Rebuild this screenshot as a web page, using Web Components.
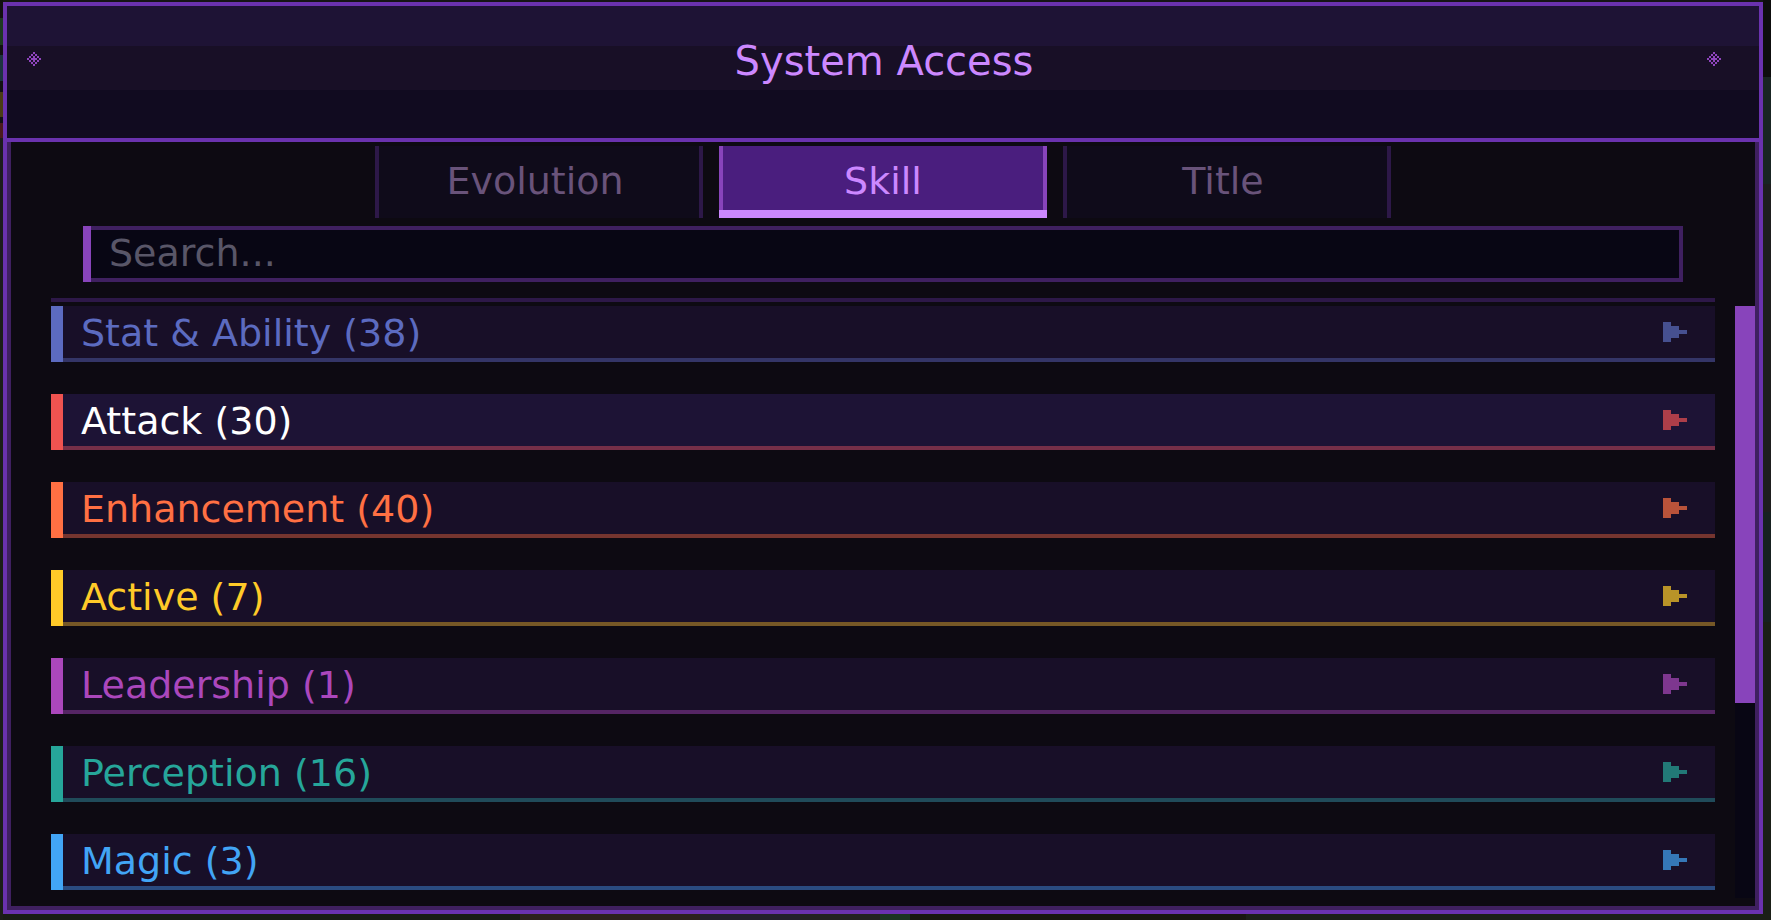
<!DOCTYPE html>
<html lang="en">
<head>
<meta charset="utf-8">
<title>System Access</title>
<style>
html { background: #191a17; }
body {
  margin: 0;
  padding: 2px 8px 6px 3px;
  font: 38px/44px "DejaVu Sans", Verdana, sans-serif;
  background:
    linear-gradient(#111 0 18px, #1d3a20 18px 45px, #111 45px 55px, #1c3440 55px 81px, #111 81px 92px, #493c14 92px 117px, #111 117px 123px, #4a1a1c 123px 138px, #1c1c1c 138px 300px, #1b1e18 300px) left / 3px 100% no-repeat,
    linear-gradient(90deg, #181c14 0 520px, #2b211c 520px 700px, #22202c 700px 800px, #222 800px 880px, #1b3420 880px 910px, #17160f 910px 1246px, #1b1f17 1246px) bottom / 100% 6px no-repeat,
    linear-gradient(#0d0d0d 0 77px, #192523 77px 184px, #1e1e1e 184px 512px, #172120 512px 622px, #1a1f17 622px) right / 8px 100% no-repeat,
    #151515;
}
</style>
</head>
<body>
<system-window heading="System Access">
  <tab-bar slot="tabs" role="tablist">
    <tab-item>Evolution</tab-item>
    <tab-item selected>Skill</tab-item>
    <tab-item>Title</tab-item>
  </tab-bar>
  <search-field slot="search" placeholder="Search..."></search-field>
  <skill-list>
    <skill-row style="--tone:#5c6bc0;--line:#343567;--mark:#465090">Stat &amp; Ability (38)</skill-row>
    <skill-row active style="--tone:#ef5350;--line:#762f48;--mark:#ad3e49">Attack (30)</skill-row>
    <skill-row style="--tone:#ff7043;--line:#75352f;--mark:#b9533a">Enhancement (40)</skill-row>
    <skill-row style="--tone:#ffca28;--line:#765826;--mark:#b99328">Active (7)</skill-row>
    <skill-row style="--tone:#ab47bc;--line:#552564;--mark:#7e378f">Leadership (1)</skill-row>
    <skill-row style="--tone:#26a69a;--line:#204b5a;--mark:#227977">Perception (16)</skill-row>
    <skill-row style="--tone:#42a5f5;--line:#2a4b80;--mark:#3577b7">Magic (3)</skill-row>
  </skill-list>
</system-window>

<script>
const define = (name, html, setup) => {
  const template = document.createElement('template');
  template.innerHTML = html;
  customElements.define(name, class extends HTMLElement {
    constructor() {
      super();
      this.attachShadow({ mode: 'open' }).append(template.content.cloneNode(true));
    }
    connectedCallback() { if (setup) setup(this, this.shadowRoot); }
  });
};

define('rune-mark', `
<style>
:host { display: block; width: 14px; height: 14px; }
svg { display: block; width: 100%; height: 100%; }
</style>
<svg viewBox="0 0 7 7" fill="#8e44bd" shape-rendering="crispEdges" aria-hidden="true">
<path d="M3 0h1v1h-1zM2 1h1v1h-1zM4 1h1v1h-1zM1 2h1v1h-1zM3 2h1v1h-1zM5 2h1v1h-1zM0 3h1v1h-1zM2 3h3v1h-3zM6 3h1v1h-1zM1 4h1v1h-1zM3 4h1v1h-1zM5 4h1v1h-1zM2 5h1v1h-1zM4 5h1v1h-1zM3 6h1v1h-1z"/>
</svg>`);

define('system-window', `
<style>
:host { display: block; border: 4px solid #6a32ae; background: #0d0a12; }
header {
  display: grid; grid-template-columns: 34px 1fr 34px; align-items: center;
  box-sizing: border-box; height: 136px; padding: 0 18px 26px 20px;
  border-bottom: 4px solid #6a32ae;
  background: linear-gradient(#1e1335 0 40px, #180f26 40px 84px, #110b20 84px);
}
h1 { margin: 0; padding-top: 4px; font: inherit; font-size: 40px; text-align: center; color: #cc88ff; }
main { border: solid #3f2060; border-width: 0 4px 4px; padding: 4px 0 8px 40px; }
.search { padding: 8px 72px 16px 32px; }
</style>
<header><rune-mark></rune-mark><h1></h1><rune-mark></rune-mark></header>
<main>
<slot name="tabs"></slot>
<div class="search"><slot name="search"></slot></div>
<slot></slot>
</main>`, (el, root) => { root.querySelector('h1').textContent = el.getAttribute('heading'); });

define('tab-bar', `
<style>
:host { display: flex; justify-content: center; gap: 16px; padding-right: 40px; }
</style>
<slot></slot>`);

define('tab-item', `
<style>
:host { display: block; flex: 0 1 328px; }
button {
  display: block; box-sizing: border-box; width: 100%; height: 72px; margin: 0; padding: 0 8px 2px 0;
  font: inherit; color: #69537a; background: #0f0b1a;
  border: solid #2d1848; border-width: 0 4px;
}
:host([selected]) { background: linear-gradient(#cc88ff, #cc88ff) bottom / 100% 8px no-repeat; }
:host([selected]) button {
  height: 64px; margin-bottom: 8px; padding: 6px 0 0;
  color: #cc88ff; background: #4a1e7e; border-color: #8844bb;
}
</style>
<button type="button" role="tab"><slot></slot></button>`, (el, root) => {
  root.querySelector('button').setAttribute('aria-selected', String(el.hasAttribute('selected')));
});

define('search-field', `
<style>
:host { display: block; }
label { display: block; border-left: 8px solid #8844bb; }
input {
  display: block; box-sizing: border-box; width: 100%; height: 56px; margin: 0; padding: 0 18px 2px;
  font: inherit; color: #cc88ff; background: #080614; border-radius: 0; outline: 0;
  border: 4px solid #3f2060; border-left: 0;
}
input::placeholder { color: #595668; opacity: 1; }
</style>
<label><input type="text" aria-label="Search"></label>`, (el, root) => {
  root.querySelector('input').placeholder = el.getAttribute('placeholder');
});

define('skill-list', `
<style>
:host { display: grid; grid-template-columns: 1fr 20px; column-gap: 20px; row-gap: 4px; }
.rule { grid-column: 1; height: 4px; background: #2d1848; }
.rows { grid-column: 1; display: flex; flex-direction: column; gap: 32px; padding-bottom: 8px; }
.track { grid-column: 2; background: #080614; }
.thumb { height: 67%; background: #8844bb; }
</style>
<div class="rule"></div>
<div class="rows"><slot></slot></div>
<div class="track"><div class="thumb"></div></div>`);

define('skill-row', `
<style>
:host { display: block; border-left: 12px solid var(--tone); }
button {
  display: flex; align-items: center; justify-content: space-between;
  box-sizing: border-box; width: 100%; height: 56px; margin: 0; padding: 0 28px 0 18px;
  font: inherit; text-align: left; color: var(--tone); background: #180f28;
  border: 0; box-shadow: inset 0 -4px var(--line);
}
:host([active]) button { color: #fff; background: #1d1335; }
span { padding-bottom: 2px; }
svg { display: block; width: 24px; height: 20px; margin-bottom: 4px; fill: var(--mark); }
</style>
<button type="button" aria-expanded="false">
<span><slot></slot></span>
<svg viewBox="0 0 6 5" shape-rendering="crispEdges" aria-hidden="true"><path d="M0 0h2v1h2v1h2v1h-2v1h-2v1h-2z"/></svg>
</button>`);
</script>
</body>
</html>
